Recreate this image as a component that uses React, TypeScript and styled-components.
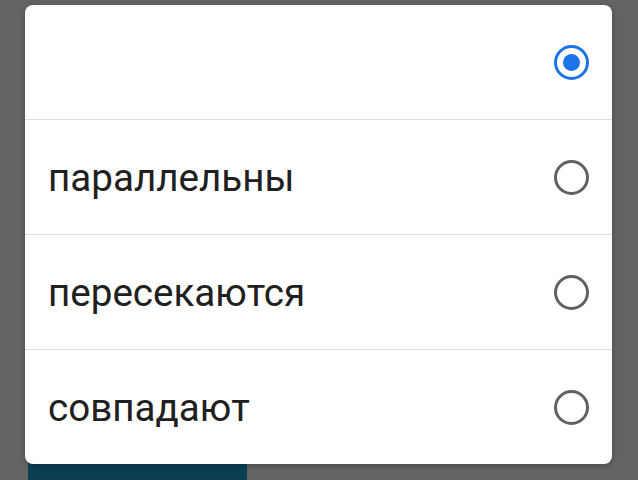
import React, { useState } from 'react';
import styled, { createGlobalStyle } from 'styled-components';

const options = ['', 'параллельны', 'пересекаются', 'совпадают'];

export default function App() {
  const [selected, setSelected] = useState(0);

  return (
    <>
      <GlobalStyle />
      <Screen>
        <Backdrop>
          <ActionButton />
        </Backdrop>
        <Dialog role="radiogroup">
          {options.map((label, i) => (
            <Row key={i} onClick={() => setSelected(i)}>
              <Label>{label}</Label>
              <Radio $checked={selected === i} />
            </Row>
          ))}
        </Dialog>
      </Screen>
    </>
  );
}

const GlobalStyle = createGlobalStyle`
  html, body {
    margin: 0;
    padding: 0;
    background: #646464;
  }
  body {
    font-family: Roboto, "Noto Sans", sans-serif;
  }
`;

const Screen = styled.div`
  position: relative;
  width: 638px;
  height: 480px;
  overflow: hidden;
  background: #646464;
`;

const Backdrop = styled.div`
  display: flex;
  padding: 440px 0 0 28px;
`;

const ActionButton = styled.div`
  width: 219px;
  height: 60px;
  border-radius: 8px;
  background: #0c3e54;
`;

const Dialog = styled.div`
  position: absolute;
  top: 5px;
  left: 25px;
  width: 587px;
  display: flex;
  flex-direction: column;
  background: #fff;
  border-radius: 8px;
  box-shadow: 0 2px 6px rgba(0, 0, 0, 0.25);
  overflow: hidden;
`;

const Row = styled.div`
  display: flex;
  align-items: center;
  justify-content: space-between;
  height: 114px;
  padding: 0 23px;
  border-bottom: 1px solid #dedede;
  cursor: pointer;

  &:last-child {
    border-bottom: none;
  }
`;

const Label = styled.span`
  font-size: 38.6px;
  color: #202020;
`;

const Radio = styled.span<{ $checked: boolean }>`
  position: relative;
  box-sizing: border-box;
  width: 35px;
  height: 35px;
  flex-shrink: 0;
  border-radius: 50%;
  border: 3px solid ${(p) => (p.$checked ? '#1a73e8' : '#616161')};

  &::after {
    content: '';
    position: absolute;
    inset: 6px;
    border-radius: 50%;
    background: #1a73e8;
    display: ${(p) => (p.$checked ? 'block' : 'none')};
  }
`;
